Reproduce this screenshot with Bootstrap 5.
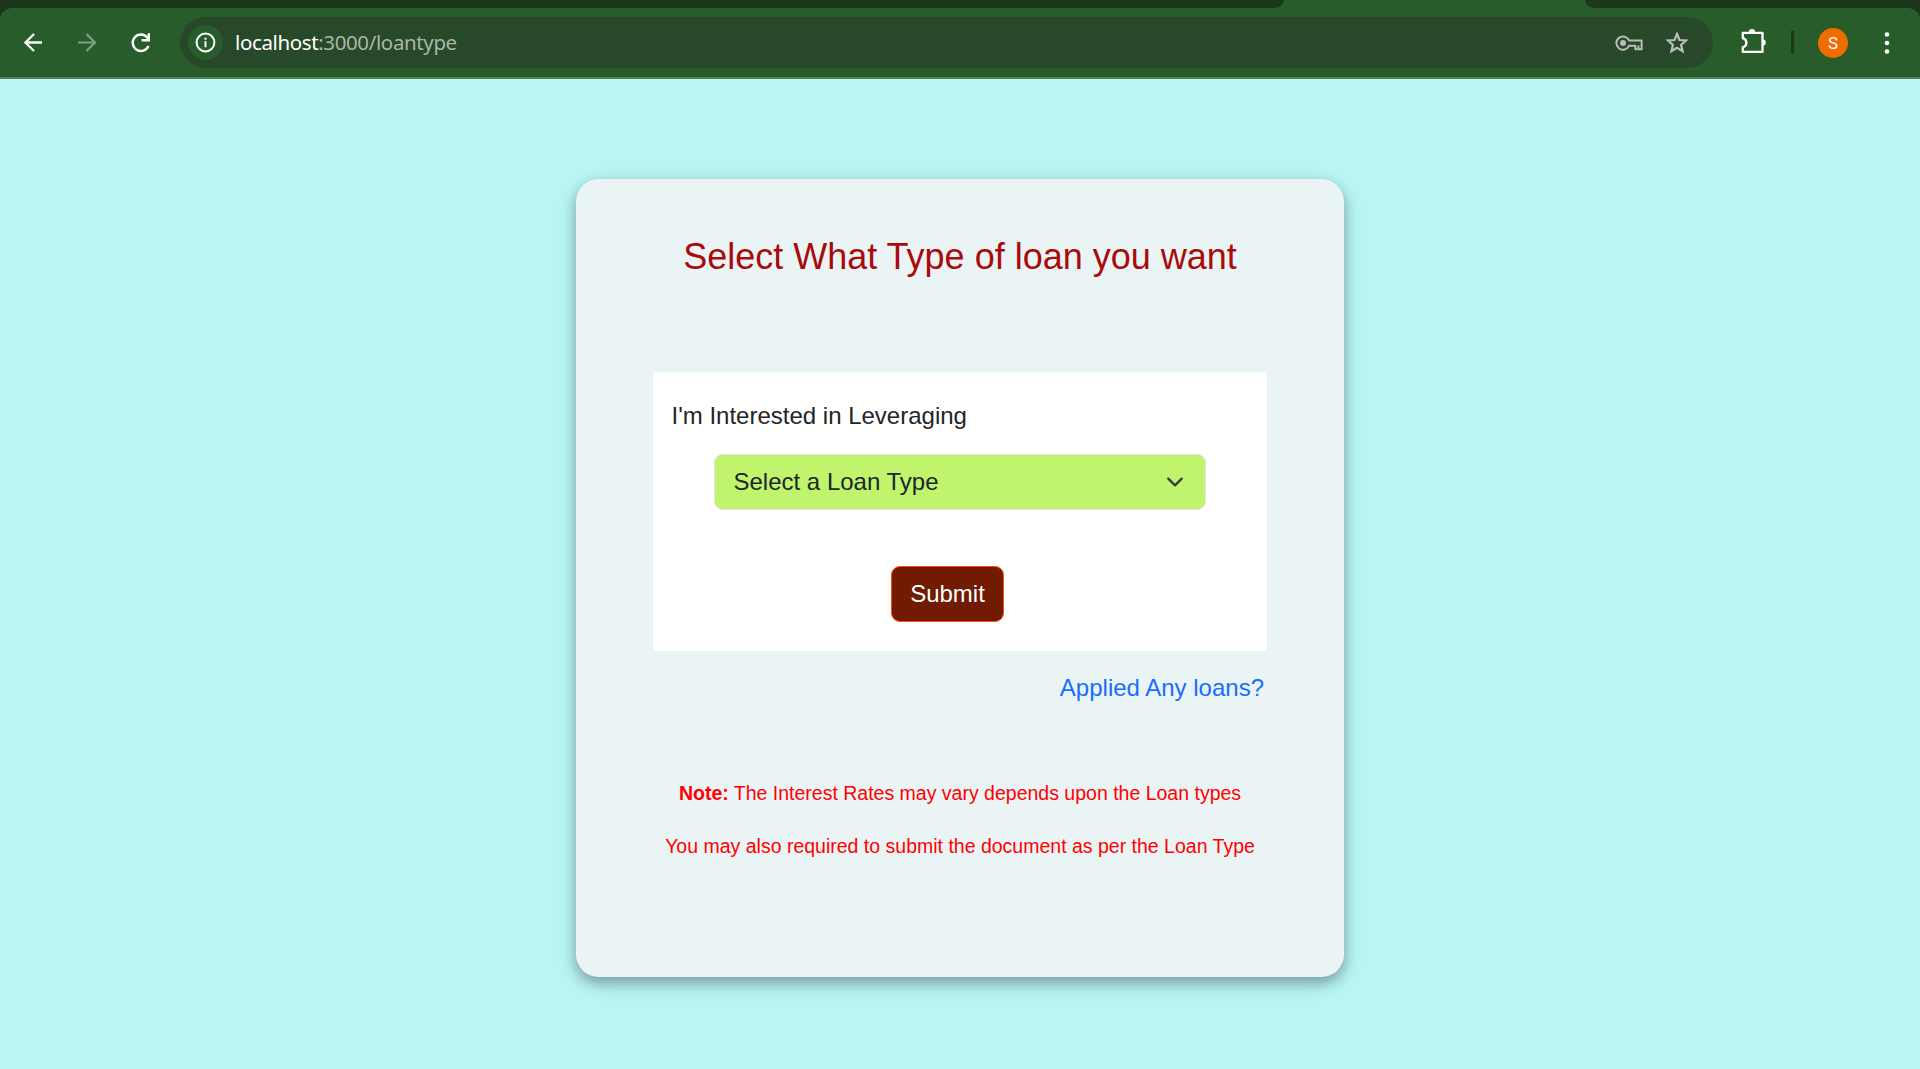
<!DOCTYPE html>
<html lang="en">
<head>
<meta charset="utf-8">
<title>Loan type</title>
<link href="https://cdn.jsdelivr.net/npm/bootstrap@5.3.0/dist/css/bootstrap.min.css" rel="stylesheet">
<style>
  body { font-family: "Liberation Sans", Arial, sans-serif; font-size: 24px; line-height: 36px; background: #b8f5f4; height: 1069px; overflow: hidden; }
  .chrome { height: 79px; background: #1b381b; }
  .tabstrip { height: 8px; background: #285d2b; }
  .strip-left { width: 1284px; background: #1b381b; border-bottom-right-radius: 13px 10px; }
  .strip-right { width: 335px; background: #1b381b; border-bottom-left-radius: 13px 10px; }
  .toolbar { height: 71px; background: #285d2b; border-radius: 12px 12px 0 0; border-bottom: 2px solid #54855a; padding: 9px 23px 9px 20px; }
  .nav-icons { width: 160px; }
  .nav-icons svg + svg { margin-left: 26px; }
  .nav-icons svg:last-child { margin-left: 27px; }
  .omnibox { width: 1533px; height: 51px; border-radius: 26px; background: #27492a; padding: 0 21px 0 8px; }
  .site-info { width: 35px; height: 35px; background: #285d2b; }
  .url { font-family: "Noto Sans", "Open Sans", sans-serif; font-size: 20.5px; line-height: 30px; letter-spacing: -.38px; color: #a8b6a9; margin: 0 0 2px 12px; white-space: nowrap; }
  .url span { color: #fff; }
  .divider { width: 3px; height: 23px; background: #1b381b; }
  .avatar { width: 30px; height: 30px; background: #ef6c00; font: 17px/30px Roboto, sans-serif; margin-left: 24px; }
  .menu-dots { margin-left: 29px; }
  .star { margin-left: 18px; }
  .puzzle { margin-left: 26px; margin-bottom: 1px; }
  .loan-card { width: 768px; height: 798px; margin-top: 100px; border-radius: 22.5px; background: #ebf4f5; box-shadow: 0 6px 12px rgba(0,0,0,.2), 0 6px 20px rgba(0,0,0,.19); padding: 56px 77px 0; }
  .loan-title { font-size: 36px; line-height: 43px; color: #aa0a0a; margin-bottom: 94px; white-space: nowrap; }
  .loan-form { height: 279px; background: #fffffd; padding: 26px 0 0; }
  .loan-label { margin: 0 18.5px 20px; }
  .loan-select { width: 492px; height: 56px; background-color: #bff46c; font-size: 24px; line-height: 36px; padding: 9px 54px 9px 18.5px; border: 1px solid #dee2e6; border-radius: 9px; background-size: 24px 18px; background-position: right 18px center; }
  .btn-loan { width: 113px; height: 56px; margin: 56px 0 0 -26px; padding: 9px 0 9px 1px; font-size: 24px; line-height: 36px; border-radius: 9px; background: #701b02; border: 1px solid #fe4b1d; color: #fff; }
  .applied-link { color: #1b6cff; margin: 19px 3px 73px; }
  .loan-note { font-size: 19.5px; line-height: 29px; color: #f00; margin-bottom: 24px; white-space: nowrap; }
</style>
</head>
<body>
<header class="chrome">
  <div class="tabstrip d-flex justify-content-between"><div class="strip-left"></div><div class="strip-right"></div></div>
  <div class="toolbar d-flex align-items-center">
    <div class="nav-icons d-flex align-items-center flex-shrink-0">
      <svg width="27" height="27" viewBox="0 0 27 27" fill="none" stroke="#fff" stroke-width="2.3"><path d="M22 13.5H5.500M14 5L5.500 13.500L14 22"/></svg>
      <svg width="27" height="27" viewBox="0 0 27 27" fill="none" stroke="#7e9f80" stroke-width="2.200"><path d="M5 13.500H22M13.500 5L22 13.500L13.500 22"/></svg>
      <svg width="27" height="27" viewBox="0 0 27 27" fill="none" stroke="#fff" stroke-width="2.400"><path d="M21.500 17A8.200 8.200 0 1 1 20.300 8.500L22 11M21.800 4.200V11.300H14.600"/></svg>
    </div>
    <div class="omnibox d-flex align-items-center flex-shrink-0">
      <div class="site-info rounded-circle d-flex align-items-center justify-content-center">
        <svg width="21" height="21" viewBox="0 0 21 21"><circle cx="10.500" cy="10.500" r="8.900" fill="none" stroke="#fff" stroke-width="2"/><path d="M9.500 9.300h2v6h-2zM9.500 5.700h2v2h-2z" fill="#fff"/></svg>
      </div>
      <div class="url"><span>localhost</span>:3000/loantype</div>
      <svg class="ms-auto" width="30" height="24" viewBox="0 0 30 24" fill="none" stroke="#b9bcb9" stroke-width="2"><path d="M15 9.400H27.600V18.200H21.400V14.800H15A6.600 6.600 0 1 1 15 9.400ZM24.500 14.500V18" stroke-linejoin="round"/><circle cx="9" cy="12.100" r="3" fill="#b9bcb9" stroke="none"/></svg>
      <svg class="star" width="30" height="28" viewBox="0 0 30 28" fill="none" stroke="#b9bcb9" stroke-width="2.200"><path d="M15 5L17.500 11L24 11.500L19.100 15.800L20.600 22.200L15 18.800L9.400 22.200L10.900 15.800L6 11.500L12.500 11Z"/></svg>
    </div>
    <svg class="puzzle flex-shrink-0" width="30" height="30" viewBox="0 0 30 30"><path d="M3.800 5.800H23.500V24.900H3.800V20.400C8.600 19 8.600 12.600 3.800 11.200Z" fill="none" stroke="#fff" stroke-width="2.300" stroke-linejoin="round"/><path d="M9.900 5.200a3.100 3.100 0 0 1 6.200 0zM23.700 12.400a3.100 3.100 0 0 1 0 6.200z" fill="#fff"/></svg>
    <div class="divider ms-auto"></div>
    <div class="avatar rounded-circle text-white text-center">S</div>
    <svg class="menu-dots" width="20" height="24" viewBox="0 0 20 24" fill="#fff"><circle cx="10" cy="3.500" r="2.300"/><circle cx="10" cy="12" r="2.300"/><circle cx="10" cy="20.500" r="2.300"/></svg>
  </div>
</header>
<main class="d-flex justify-content-center">
  <section class="loan-card">
    <h1 class="loan-title text-center fw-normal">Select What Type of loan you want</h1>
    <form class="loan-form d-flex flex-column align-items-center">
      <label class="loan-label align-self-start" for="loanType">I'm Interested in Leveraging</label>
      <select id="loanType" class="form-select loan-select"><option>Select a Loan Type</option></select>
      <button type="button" class="btn btn-loan">Submit</button>
    </form>
    <div class="text-end"><a class="applied-link d-inline-block text-decoration-none" href="#">Applied Any loans?</a></div>
    <p class="loan-note text-center"><b>Note:</b> The Interest Rates may vary depends upon the Loan types</p>
    <p class="loan-note text-center">You may also required to submit the document as per the Loan Type</p>
  </section>
</main>
<script src="https://cdn.jsdelivr.net/npm/bootstrap@5.3.0/dist/js/bootstrap.bundle.min.js"></script>
</body>
</html>
